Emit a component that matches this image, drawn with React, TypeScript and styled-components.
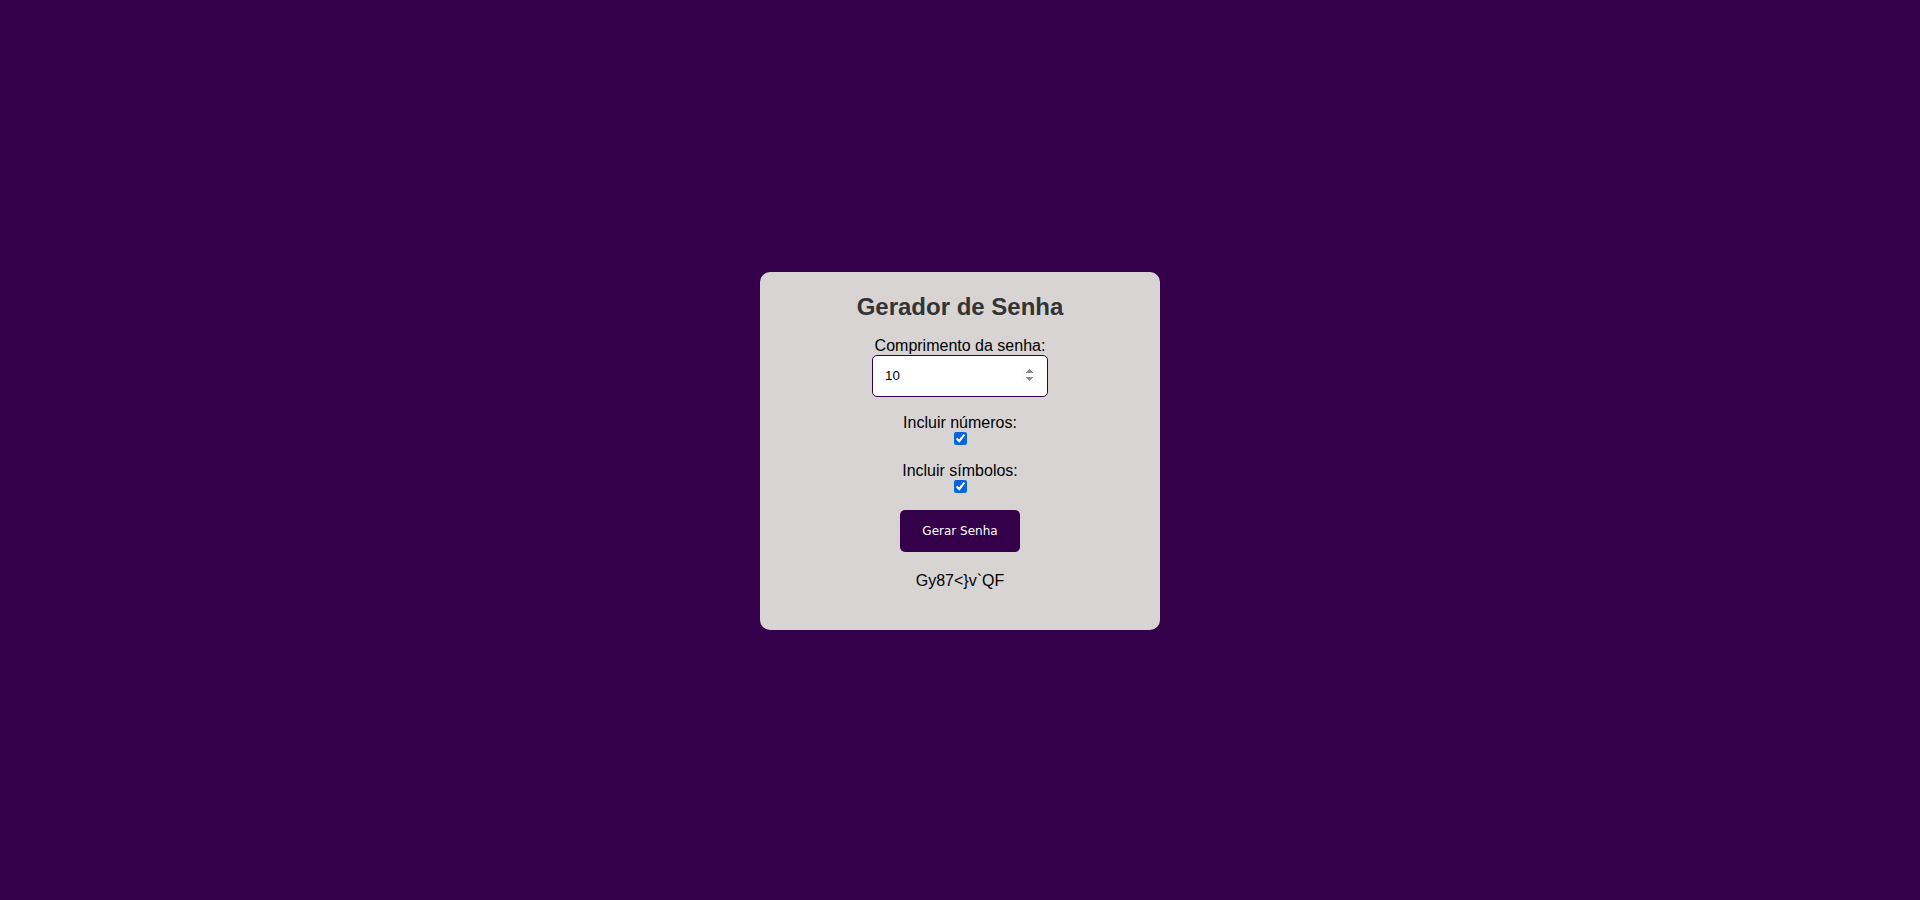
import React, { useState } from 'react';
import styled, { createGlobalStyle } from 'styled-components';

const GlobalStyle = createGlobalStyle`
  html, body {
    margin: 0;
    padding: 0;
  }

  body {
    background-color: #35004a;
    font-family: "Liberation Sans", Arial, sans-serif;
  }
`;

const Page = styled.div`
  box-sizing: border-box;
  min-height: 100vh;
  padding-top: 1px;
  display: flex;
  align-items: center;
  justify-content: center;
`;

const Card = styled.div`
  box-sizing: border-box;
  width: 400px;
  padding: 21px 20px 20px;
  background-color: #d8d4d4;
  border-radius: 10px;
  text-align: center;
`;

const Title = styled.h2`
  margin: 0 0 16px;
  font-size: 24px;
  font-weight: bold;
  color: #333333;
`;

const Field = styled.div`
  margin-bottom: 17px;
`;

const Label = styled.label`
  display: block;
  font-size: 16px;
  color: #000000;
`;

const NumberInput = styled.input`
  box-sizing: border-box;
  width: 176px;
  height: 42px;
  padding: 0 10px 0 12px;
  border: 1px solid #35004a;
  border-radius: 5px;
  background: #ffffff;
  font-family: "Liberation Sans", Arial, sans-serif;
  font-size: 13.33px;
  color: #000000;
  outline: none;

  &::-webkit-inner-spin-button,
  &::-webkit-outer-spin-button {
    opacity: 1;
  }
`;

const Checkbox = styled.input`
  display: block;
  width: 13px;
  height: 13px;
  margin: 0 auto;
  accent-color: #0b64d8;
`;

const Button = styled.button`
  width: 120px;
  height: 42px;
  padding: 0;
  border: none;
  border-radius: 5px;
  background-color: #35004a;
  color: #ffffff;
  font-family: "DejaVu Sans", Verdana, sans-serif;
  font-size: 12px;
  cursor: pointer;
`;

const Result = styled.p`
  margin: 20px 0 20px;
  font-size: 16px;
  color: #000000;
`;

const PasswordGenerator: React.FC = () => {
  const [length, setLength] = useState(10);
  const [numbers, setNumbers] = useState(true);
  const [symbols, setSymbols] = useState(true);
  const [password, setPassword] = useState('Gy87<}v`QF');

  const generate = () => {
    let chars = 'ABCDEFGHIJKLMNOPQRSTUVWXYZabcdefghijklmnopqrstuvwxyz';
    if (numbers) chars += '0123456789';
    if (symbols) chars += '!@#$%^&*()_+-=[]{}<>?`~';
    let out = '';
    for (let i = 0; i < length; i++) {
      out += chars[Math.floor(Math.random() * chars.length)];
    }
    setPassword(out);
  };

  return (
    <Card>
      <Title>Gerador de Senha</Title>
      <Field>
        <Label htmlFor="length">Comprimento da senha:</Label>
        <NumberInput
          id="length"
          type="number"
          min={4}
          max={64}
          value={length}
          onChange={e => setLength(Number(e.target.value))}
        />
      </Field>
      <Field>
        <Label htmlFor="numbers">Incluir números:</Label>
        <Checkbox id="numbers" type="checkbox" checked={numbers} onChange={e => setNumbers(e.target.checked)} />
      </Field>
      <Field>
        <Label htmlFor="symbols">Incluir símbolos:</Label>
        <Checkbox id="symbols" type="checkbox" checked={symbols} onChange={e => setSymbols(e.target.checked)} />
      </Field>
      <Button onClick={generate}>Gerar Senha</Button>
      <Result>{password}</Result>
    </Card>
  );
};

const App: React.FC = () => (
  <>
    <GlobalStyle />
    <Page>
      <PasswordGenerator />
    </Page>
  </>
);

export default App;
